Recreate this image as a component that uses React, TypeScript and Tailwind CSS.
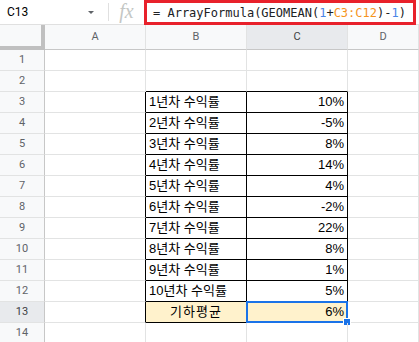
import React from "react";

const GRID = "border-[#e2e3e3]";

type Row = { label: string; value: string };
const data: Row[] = [
  { label: "1년차 수익률", value: "10%" },
  { label: "2년차 수익률", value: "-5%" },
  { label: "3년차 수익률", value: "8%" },
  { label: "4년차 수익률", value: "14%" },
  { label: "5년차 수익률", value: "4%" },
  { label: "6년차 수익률", value: "-2%" },
  { label: "7년차 수익률", value: "22%" },
  { label: "8년차 수익률", value: "8%" },
  { label: "9년차 수익률", value: "1%" },
  { label: "10년차 수익률", value: "5%" },
];

const cellFont = { fontFamily: '"Liberation Sans", Arial, "Noto Sans CJK KR", sans-serif' };

function Cell({
  children,
  rightBlack,
  bottomBlack,
  className = "",
}: {
  children?: React.ReactNode;
  rightBlack?: boolean;
  bottomBlack?: boolean;
  className?: string;
}) {
  return (
    <div
      className={
        "h-[21px] border-r border-b flex items-center text-[13px] text-black " +
        GRID +
        " " +
        (rightBlack ? "border-r-black " : "") +
        (bottomBlack ? "border-b-black " : "") +
        className
      }
      style={cellFont}
    >
      {children}
    </div>
  );
}

function RowHeader({ n, selected }: { n: number; selected?: boolean }) {
  return (
    <div
      className={
        "h-[21px] border-r border-b border-r-[#c7c7c7] border-b-[#e2e3e3] flex items-center justify-center text-[11px] " +
        (selected ? "bg-[#e8eaed] text-[#3c4043]" : "bg-[#f8f9fa] text-[#5f6368]")
      }
      style={{ fontFamily: "Roboto, Arial, sans-serif" }}
    >
      {n}
    </div>
  );
}

export default function App() {
  const rows = Array.from({ length: 14 }, (_, i) => i + 1);
  return (
    <div className="w-[419px] h-[342px] overflow-hidden bg-white select-none">
      {/* formula bar */}
      <div className="h-[25px] flex border-b border-[#e0e0e0] bg-white">
        <div className="w-[108px] flex items-center pl-[7px] pr-[14px] justify-between">
          <span className="text-[12px] text-black" style={{ fontFamily: "Roboto, Arial, sans-serif" }}>
            C13
          </span>
          <span className="w-0 h-0 border-l-[3px] border-r-[3px] border-t-[3px] border-l-transparent border-r-transparent border-t-[#5f6368]" />
        </div>
        <div className="w-px my-[3px] bg-[#e0e0e0]" />
        <div className="w-[35px] flex items-center justify-center">
          <span
            className="text-[20px] italic text-[#c4c7c5] leading-none -mt-[2px]"
            style={{ fontFamily: '"Liberation Serif", "Times New Roman", serif' }}
          >
            fx
          </span>
        </div>
        <div className="w-[272px] h-[25px] border-[3px] border-[#e8212b] flex items-center pl-[6px]">
          <span
            className="text-[12px] text-[#202124] whitespace-pre"
            style={{ fontFamily: '"DejaVu Sans Mono", "Liberation Mono", monospace' }}
          >
            {"= ArrayFormula(GEOMEAN("}
            <span className="text-[#4a86e8]">1</span>
            {"+"}
            <span className="text-[#f6941d]">C3:C12</span>
            {")-"}
            <span className="text-[#4a86e8]">1</span>
            {")"}
          </span>
        </div>
      </div>

      {/* grid */}
      <div className="grid grid-cols-[45px_101px_101px_101px_1fr]">
        {/* header row */}
        <div className="h-[25px] bg-[#f8f9fa] border-r-[4px] border-b-[4px] border-[#c0c0c0]" />
        {["A", "B", "C", "D"].map((c) => (
          <div
            key={c}
            className={
              "h-[25px] border-r border-b border-r-[#e2e3e3] border-b-[#c7c7c7] flex items-center justify-center text-[11px] " +
              (c === "C" ? "bg-[#e8eaed] text-[#3c4043]" : "bg-[#f8f9fa] text-[#5f6368]")
            }
            style={{ fontFamily: "Roboto, Arial, sans-serif" }}
          >
            {c}
          </div>
        ))}

        {rows.map((r) => {
          const inTable = r >= 3 && r <= 13;
          const isTotal = r === 13;
          const d = r >= 3 && r <= 12 ? data[r - 3] : null;
          return (
            <React.Fragment key={r}>
              <RowHeader n={r} selected={r === 13} />
              <Cell rightBlack={inTable} />
              <Cell
                rightBlack={inTable}
                bottomBlack={r >= 2 && r <= 13}
                className={isTotal ? "bg-[#fff2cc] justify-center" : "pl-[3px]"}
              >
                {d ? d.label : isTotal ? <span className="tracking-[1px]">기하평균</span> : null}
              </Cell>
              <Cell
                rightBlack={inTable}
                bottomBlack={r >= 2 && r <= 13}
                className={"justify-end pr-[3px] relative " + (isTotal ? "bg-[#fff2cc]" : "")}
              >
                {d ? d.value : isTotal ? "6%" : null}
                {isTotal && (
                  <>
                    <div className="absolute -left-px -top-px -right-px -bottom-px border-2 border-[#1a73e8] pointer-events-none" />
                    <div className="absolute -right-[4px] -bottom-[4px] w-[6px] h-[6px] bg-[#1a73e8] border border-white box-content" />
                  </>
                )}
              </Cell>
              <Cell />
            </React.Fragment>
          );
        })}
      </div>
    </div>
  );
}
